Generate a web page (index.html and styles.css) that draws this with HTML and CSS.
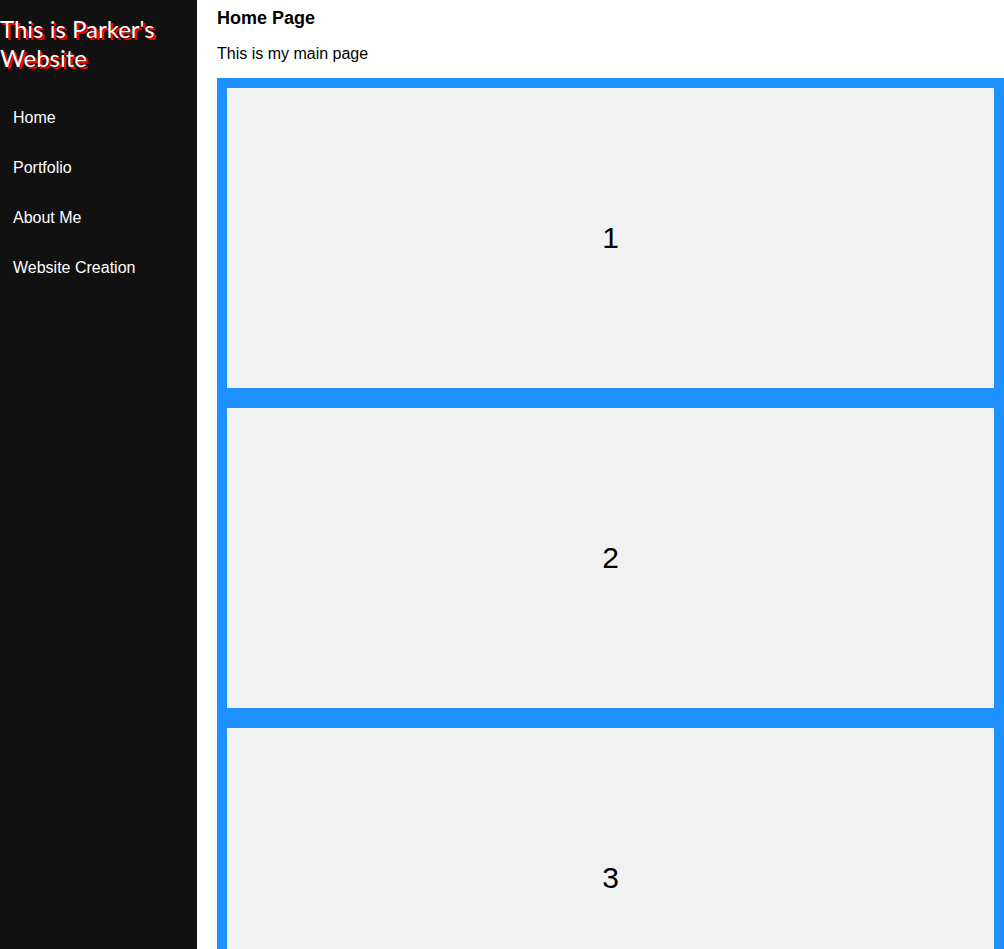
FILE: index.html
```html
<!DOCTYPE html>
<html lang="en">
<head>
  <meta charset="utf-8">
  <meta name="viewport" content="width=device-width, initial-scale=1">
  <title>Home Page</title>
  <link rel="stylesheet" href="styles.css">
</head>
<body>
  <div class="layout">
    <aside class="sidebar">
      <h1 class="site-title">This is Parker's Website</h1>
      <nav class="menu">
        <a class="menu-link" href="#home">Home</a>
        <a class="menu-link" href="#portfolio">Portfolio</a>
        <a class="menu-link" href="#about">About Me</a>
        <a class="menu-link" href="#creation">Website Creation</a>
      </nav>
    </aside>
    <main class="content" id="home">
      <h2 class="page-title">Home Page</h2>
      <p class="intro">This is my main page</p>
      <div class="panels">
        <div class="panel">1</div>
        <div class="panel">2</div>
        <div class="panel">3</div>
      </div>
    </main>
  </div>
</body>
</html>
```
FILE: styles.css
```css
* {
  box-sizing: border-box;
}

body {
  margin: 0;
  background: #fff;
  color: #000;
  font-family: "Liberation Sans", Arial, sans-serif;
  font-size: 16px;
  line-height: 18px;
}

.layout {
  display: flex;
  height: 100vh;
}

.sidebar {
  flex: 0 0 197px;
  padding-top: 14px;
  background: #111;
}

.site-title {
  margin: 0 0 21px;
  color: #fff;
  font-family: Lato, sans-serif;
  font-size: 24px;
  font-weight: 400;
  line-height: 29px;
  text-shadow: 2px 2px #f00;
}

.menu {
  display: flex;
  flex-direction: column;
}

.menu-link {
  padding: 16px 13px;
  color: #fff;
  text-decoration: none;
}

.content {
  flex: 1;
  min-width: 0;
  padding: 8px 0 0 20px;
  overflow-y: auto;
  scrollbar-width: none;
}

.page-title {
  margin: 0 0 17px;
  font-size: 18px;
  line-height: 20px;
}

.intro {
  margin: 0 0 15px;
}

.panels {
  display: flex;
  flex-direction: column;
  gap: 20px;
  padding: 10px;
  background: dodgerblue;
}

.panel {
  background: #f1f1f1;
  font-size: 30px;
  line-height: 300px;
  text-align: center;
}
```
